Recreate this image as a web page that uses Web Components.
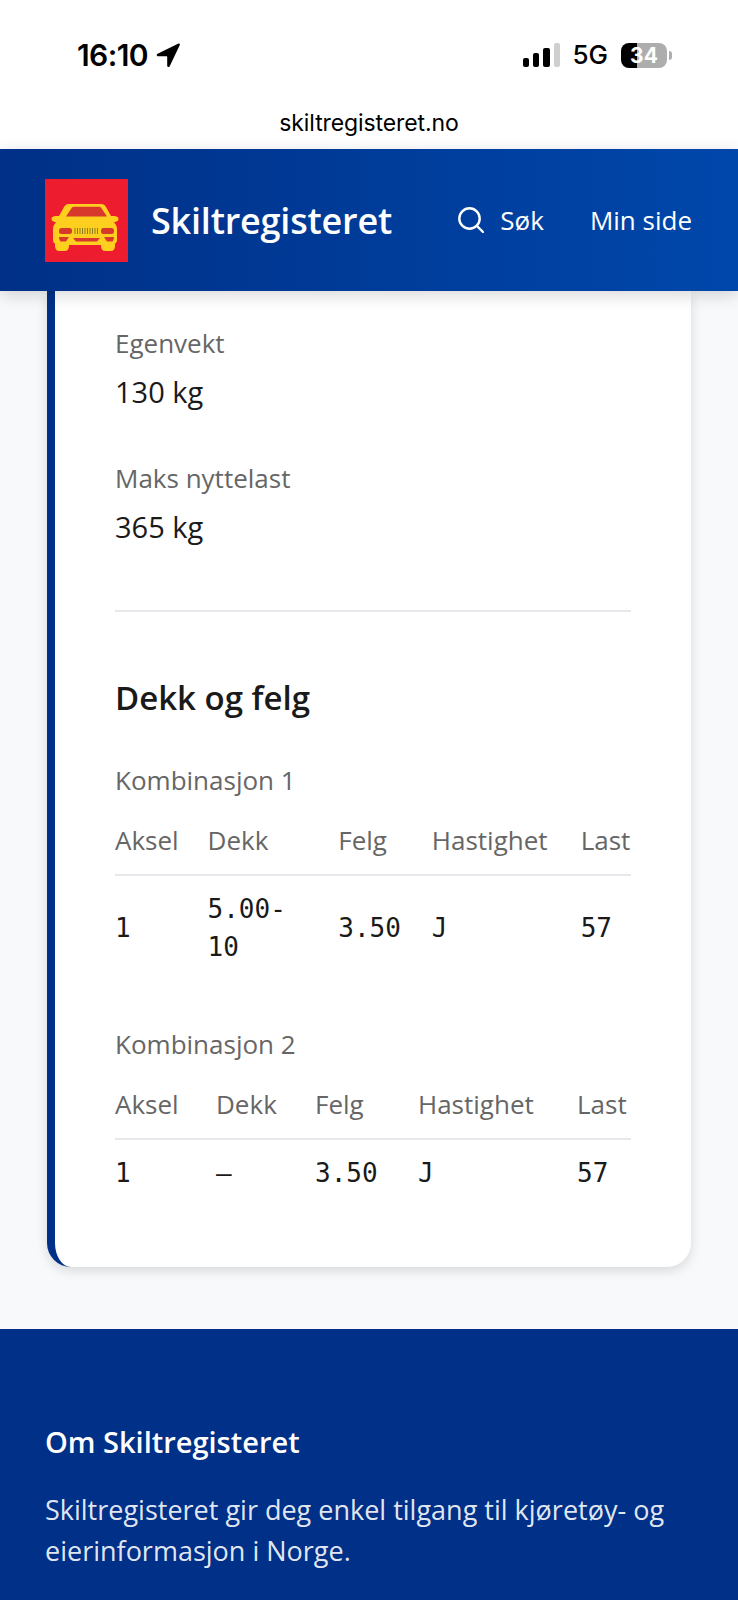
<!DOCTYPE html>
<html lang="no">
<head>
<meta charset="utf-8">
<title>Skiltregisteret</title>
<style>
  html, body { margin: 0; height: 1600px; overflow: hidden; background: #f8f9fb; font-family: "Open Sans", sans-serif; }
</style>
</head>
<body>
<status-bar></status-bar>
<url-bar>skiltregisteret.no</url-bar>
<site-header></site-header>
<spec-card>
  <spec-item label="Egenvekt" value="130 kg"></spec-item>
  <spec-item label="Maks nyttelast" value="365 kg"></spec-item>
  <h-rule></h-rule>
  <section-title>Dekk og felg</section-title>
  <tire-table label="Kombinasjon 1" cols="92,130,93,148,50" dekk="5.00-10"></tire-table>
  <tire-table label="Kombinasjon 2" cols="101,99,103,159,54" dekk="—"></tire-table>
</spec-card>
<site-footer></site-footer>

<script>
const shadow = (el, html) => {
  el.attachShadow({ mode: "open" }).innerHTML = html;
};

customElements.define("status-bar", class extends HTMLElement {
  connectedCallback() {
    shadow(this, `<style>
      :host { display: flex; align-items: center; height: 100px; padding: 10px 66px 0 77px; box-sizing: border-box; background: #fff; color: #000; font-family: Inter, sans-serif; }
      .time { font-size: 30px; font-weight: 600; letter-spacing: -.6px; line-height: 30px; }
      .arrow { margin-left: 8px; }
      .right { margin-left: auto; display: flex; align-items: center; }
      .net { font-size: 26px; font-weight: 500; margin: 0 13px 0 12px; line-height: 30px; }
      .bat { position: relative; width: 46px; height: 25px; border-radius: 8px; overflow: hidden; background: linear-gradient(90deg, #000 34%, #adadad 34%); color: #fff; font-size: 21px; font-weight: 700; text-align: center; line-height: 25px; }
      .nub { width: 3px; height: 9px; margin-left: 2px; background: #adadad; border-radius: 0 3px 3px 0; }
    </style>
    <span class="time">16:10</span>
    <svg class="arrow" width="24" height="24" viewBox="0 0 24 24"><path d="M22.5.6 1.6 10.8c-1.4.7-1 2.5.5 2.5h8.6c.3 0 .5.2.5.5v8.9c0 1.5 1.9 1.9 2.5.5L23.8 1.9c.4-.9-.4-1.7-1.3-1.3z" fill="#000"/></svg>
    <div class="right">
      <svg width="37" height="24" viewBox="0 0 37 24"><rect x="0" y="15" width="6" height="9" rx="2"/><rect x="10" y="10" width="6" height="14" rx="2"/><rect x="20" y="5" width="7" height="19" rx="2"/><rect x="31" y="0" width="6" height="24" rx="2" fill="#cfcfcf"/></svg>
      <span class="net">5G</span>
      <div class="bat">34</div><div class="nub"></div>
    </div>`);
  }
});

customElements.define("url-bar", class extends HTMLElement {
  connectedCallback() {
    shadow(this, `<style>
      :host { display: block; height: 49px; background: #fff; color: #000; text-align: center; font: 400 23px/46px Inter, sans-serif; letter-spacing: -.1px; }
    </style><slot></slot>`);
  }
});

customElements.define("site-header", class extends HTMLElement {
  connectedCallback() {
    shadow(this, `<style>
      :host { display: flex; position: relative; z-index: 2; align-items: center; height: 142px; padding: 0 46px 0 45px; box-sizing: border-box; background: linear-gradient(90deg, #003087, #0047ab); color: #fff; box-shadow: 0 4px 16px rgba(0,0,0,.16); }
      .logo { display: block; width: 83px; height: 83px; }
      .title { margin-left: 23px; font-size: 36px; font-weight: 600; letter-spacing: -.2px; }
      nav { margin-left: auto; display: flex; align-items: center; font-size: 26px; }
      .search { margin-right: 16px; }
      .mine { margin-left: 46px; }
    </style>
    <svg class="logo" viewBox="0 0 83 83">
      <rect width="83" height="83" fill="#ed1c2e"/>
      <path fill="#ffcf1f" d="M27 25h29c2.500 0 4 1 5 3l5 9h3c2.500 0 4.500 .8 4.500 2.800 0 2.200-2 3.200-4.500 3.400 2 2.300 3 4.300 3 7v11c0 1.500-.8 2.800-2 3.300v2.500c0 3-1.500 5-4.500 5h-5c-3 0-4.500-2-4.500-5v-1H24v1c0 3-1.500 5-4.500 5h-5c-3 0-4.500-2-4.500-5v-2.500c-1.200-.5-2-1.800-2-3.300v-11c0-2.700 1-4.700 3-7-2.500-.2-4.500-1.200-4.500-3.400 0-2 2-2.800 4.500-2.800h3l5-9c1-2 2.500-3 5-3z"/>
      <g fill="#d8382c">
        <path d="M21 37.500 27 28.500c.4-.6 1-.8 1.800-.8h25.400c.8 0 1.400.2 1.800.8l6 9z"/>
        <rect x="14" y="49" width="13" height="6" rx="2.500"/>
        <rect x="56" y="49" width="13" height="6" rx="2.500"/>
        <path d="M14 58h10l-3 4.500h-5c-1 0-2-2-2-4.500z"/>
        <path d="M69 58H59l3 4.500h5c1 0 2-2 2-4.500z"/>
        <path d="M28 59h27l-3 3.500H31z"/>
      </g>
      <g stroke="#8a7a20" stroke-width="1">
        <path d="M30 49v6M32.500 49v6M35 49v6M37.500 49v6M40 49v6M42.500 49v6M45 49v6M47.500 49v6M50 49v6M52.500 49v6"/>
      </g>
    </svg>
    <span class="title">Skiltregisteret</span>
    <nav>
      <svg class="search" width="26" height="26" viewBox="0 0 26 26" fill="none" stroke="#fff" stroke-width="2.400" stroke-linecap="round"><circle cx="11.500" cy="11.500" r="10.200"/><path d="m19 19 6 6"/></svg>
      <span>Søk</span>
      <span class="mine">Min side</span>
    </nav>`);
  }
});

customElements.define("spec-card", class extends HTMLElement {
  connectedCallback() {
    shadow(this, `<style>
      :host { display: block; width: 644px; margin: 0 0 62px 47px; padding: 32px 60px 61px; box-sizing: border-box; background: #fff; border-left: 8px solid #003087; border-radius: 0 0 24px 24px; box-shadow: 0 4px 12px rgba(0,0,0,.13); }
    </style><slot></slot>`);
  }
});

customElements.define("spec-item", class extends HTMLElement {
  connectedCallback() {
    shadow(this, `<style>
      :host { display: block; margin-bottom: 41px; }
      .label { font-size: 26px; line-height: 40px; color: #666; }
      .value { margin-top: 4px; font-size: 29px; line-height: 50px; color: #1a1a1a; }
    </style>
    <div class="label">${this.getAttribute("label")}</div>
    <div class="value">${this.getAttribute("value")}</div>`);
  }
});

customElements.define("h-rule", class extends HTMLElement {
  connectedCallback() {
    shadow(this, `<style>
      :host { display: block; height: 2px; margin-top: 58px; background: #e6e8eb; }
    </style>`);
  }
});

customElements.define("section-title", class extends HTMLElement {
  connectedCallback() {
    shadow(this, `<style>
      :host { display: block; margin: 64px 0 40px; font-size: 33px; font-weight: 600; line-height: 44px; color: #1a1a1a; }
    </style><slot></slot>`);
  }
});

customElements.define("tire-table", class extends HTMLElement {
  connectedCallback() {
    const widths = this.getAttribute("cols").split(",");
    const heads = ["Aksel", "Dekk", "Felg", "Hastighet", "Last"];
    const cells = ["1", this.getAttribute("dekk"), "3.50", "J", "57"];
    shadow(this, `<style>
      :host { display: block; margin-bottom: 44px; }
      :host(:last-child) { margin-bottom: 0; }
      .label { font-size: 26px; line-height: 40px; color: #666; margin-bottom: 20px; }
      table { width: 100%; table-layout: fixed; border-collapse: collapse; }
      th { padding: 0 0 14px; text-align: left; font-size: 26px; font-weight: 400; line-height: 40px; color: #666; white-space: nowrap; border-bottom: 2px solid #e6e8eb; }
      td { padding: 14px 0; font-family: "DejaVu Sans Mono", monospace; font-size: 26px; line-height: 38px; color: #1a1a1a; vertical-align: middle; }
      .wrap { display: block; width: 90px; overflow-wrap: normal; }
    </style>
    <div class="label">${this.getAttribute("label")}</div>
    <table>
      <colgroup>${widths.map((w) => `<col style="width:${w}px">`).join("")}</colgroup>
      <tr>${heads.map((h) => `<th>${h}</th>`).join("")}</tr>
      <tr>${cells.map((c) => `<td><span class="wrap">${c}</span></td>`).join("")}</tr>
    </table>`);
  }
});

customElements.define("site-footer", class extends HTMLElement {
  connectedCallback() {
    shadow(this, `<style>
      :host { display: block; height: 271px; padding: 92px 45px 0; box-sizing: border-box; background: #003087; color: #fff; }
      h3 { margin: 0 0 26px; font-size: 29px; font-weight: 600; line-height: 42px; }
      p { margin: 0; font-size: 27px; line-height: 41px; color: rgba(255,255,255,.9); }
    </style>
    <h3>Om Skiltregisteret</h3>
    <p>Skiltregisteret gir deg enkel tilgang til kjøretøy- og eierinformasjon i Norge.</p>`);
  }
});
</script>
</body>
</html>
